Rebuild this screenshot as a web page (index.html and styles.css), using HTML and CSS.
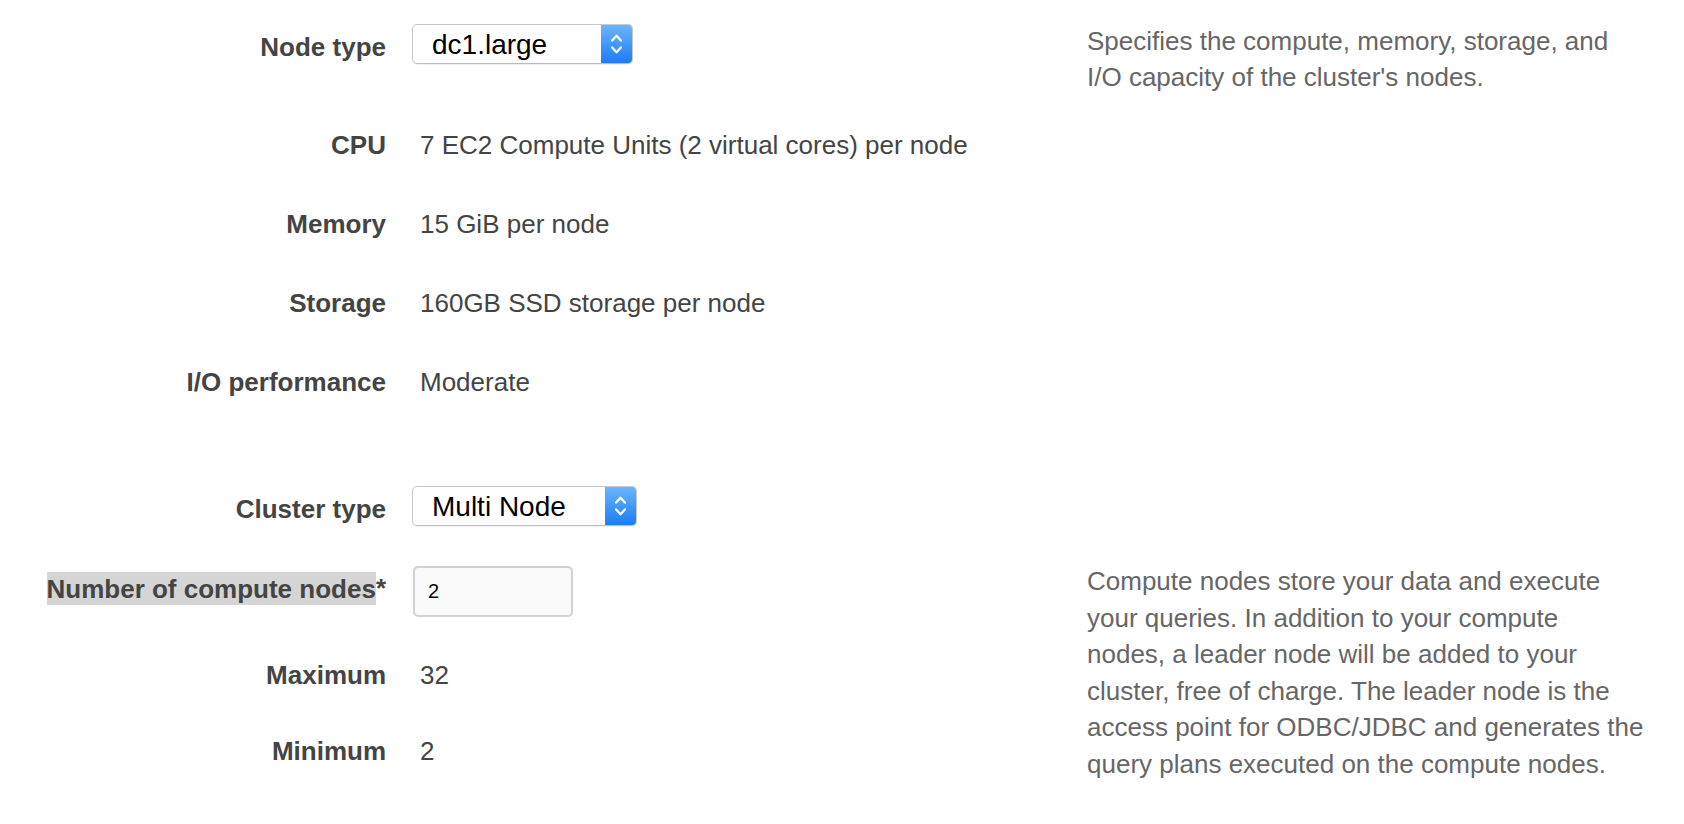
FILE: index.html
```html
<!DOCTYPE html>
<html lang="en">
<head>
<meta charset="utf-8">
<title>Cluster configuration</title>
<link rel="stylesheet" href="styles.css">
</head>
<body>
<form class="form">
  <div class="section">
    <div class="row row--select">
      <label class="label label--ctl">Node type</label>
      <div class="field">
        <div class="select select--node">
          <span class="select__value">dc1.large</span>
          <span class="select__arrows">
            <svg width="32" height="40" viewBox="0 0 32 40"><path d="M11.5 16.5 L16 11.5 L20.5 16.5 M11.5 23.5 L16 28.5 L20.5 23.5" fill="none" stroke="#fff" stroke-width="2.3" stroke-linecap="round" stroke-linejoin="round"/></svg>
          </span>
        </div>
      </div>
      <p class="desc">Specifies the compute, memory, storage, and<br>I/O capacity of the cluster's nodes.</p>
    </div>
    <div class="row row--text row--first">
      <span class="label">CPU</span>
      <div class="field"><span class="value">7 EC2 Compute Units (2 virtual cores) per node</span></div>
    </div>
    <div class="row row--text">
      <span class="label">Memory</span>
      <div class="field"><span class="value">15 GiB per node</span></div>
    </div>
    <div class="row row--text">
      <span class="label">Storage</span>
      <div class="field"><span class="value">160GB SSD storage per node</span></div>
    </div>
    <div class="row row--text">
      <span class="label">I/O performance</span>
      <div class="field"><span class="value">Moderate</span></div>
    </div>
  </div>

  <div class="section section--cluster">
    <div class="row row--select">
      <label class="label label--ctl">Cluster type</label>
      <div class="field">
        <div class="select select--cluster">
          <span class="select__value">Multi Node</span>
          <span class="select__arrows">
            <svg width="32" height="40" viewBox="0 0 32 40"><path d="M11.5 16.5 L16 11.5 L20.5 16.5 M11.5 23.5 L16 28.5 L20.5 23.5" fill="none" stroke="#fff" stroke-width="2.3" stroke-linecap="round" stroke-linejoin="round"/></svg>
          </span>
        </div>
      </div>
    </div>
    <div class="row row--input">
      <label class="label label--input"><span class="hl">Number of compute nodes</span>*</label>
      <div class="field">
        <input class="input" type="text" value="2">
      </div>
      <p class="desc desc--raised">Compute nodes store your data and execute<br>your queries. In addition to your compute<br>nodes, a leader node will be added to your<br>cluster, free of charge. The leader node is the<br>access point for ODBC/JDBC and generates the<br>query plans executed on the compute nodes.</p>
    </div>
    <div class="row row--text">
      <span class="label">Maximum</span>
      <div class="field"><span class="value">32</span></div>
    </div>
    <div class="row row--text">
      <span class="label">Minimum</span>
      <div class="field"><span class="value">2</span></div>
    </div>
  </div>
</form>
</body>
</html>
```

FILE: styles.css
```css
html, body {
  margin: 0;
  padding: 0;
  background: #ffffff;
}

body {
  min-height: 824px;
  font-family: "Liberation Sans", Arial, Helvetica, sans-serif;
  font-size: 26px;
  line-height: 36px;
  color: #444444;
}

.form {
  display: flex;
  flex-direction: column;
  padding-top: 23px;
  padding-bottom: 40px;
}

.section {
  display: flex;
  flex-direction: column;
}

.section + .section {
  margin-top: 85px;
}

.row {
  display: flex;
  align-items: center;
}

.row + .row {
  margin-top: 43px;
}

.row--first {
  margin-top: 63px !important;
}

.section--cluster .row + .row {
  margin-top: 40px;
}

.row--select {
  height: 41px;
}

.row--text {
  height: 36px;
}

.row--input {
  height: 51px;
}

.label {
  flex: none;
  width: 386px;
  text-align: right;
  font-weight: bold;
  color: #444444;
}

.label--ctl {
  padding-top: 6px;
}

.label--input {
  padding-bottom: 7px;
}

.hl {
  background: #d5d5d5;
  padding: 1.5px 0;
}

.field {
  flex: none;
  width: 675px;
  margin-left: 26px;
  display: flex;
  align-items: center;
}

.value {
  padding-left: 8px;
  color: #444444;
}

.select {
  display: flex;
  align-items: stretch;
  height: 40px;
  box-sizing: border-box;
  border: 1px solid #c9c9c9;
  border-bottom-color: #bcbcbc;
  border-radius: 5px;
  background: #ffffff;
  box-shadow: 0 1px 1px rgba(0, 0, 0, 0.06);
  overflow: hidden;
}

.select--node {
  width: 221px;
}

.select--cluster {
  width: 225px;
}

.select__value {
  flex: 1;
  padding-left: 19px;
  font-size: 28px;
  line-height: 39px;
  color: #000000;
}

.select__arrows {
  flex: none;
  width: 31px;
  display: flex;
  align-items: center;
  justify-content: center;
  background: linear-gradient(#6db4fb, #1a7df7);
}

.select__arrows svg {
  display: block;
}

.input {
  margin-left: 1px;
  width: 160px;
  height: 51px;
  box-sizing: border-box;
  border: 2px solid #d2d2d2;
  border-radius: 5px;
  background: #fafafa;
  padding: 0 0 0 13px;
  font-family: "Liberation Sans", Arial, Helvetica, sans-serif;
  font-size: 20px;
  color: #000000;
  outline: none;
}

.desc {
  flex: none;
  align-self: flex-start;
  width: 600px;
  margin: 0;
  color: #666666;
  white-space: nowrap;
}

.desc--raised {
  margin-top: -3px;
  line-height: 36.5px;
}
```
